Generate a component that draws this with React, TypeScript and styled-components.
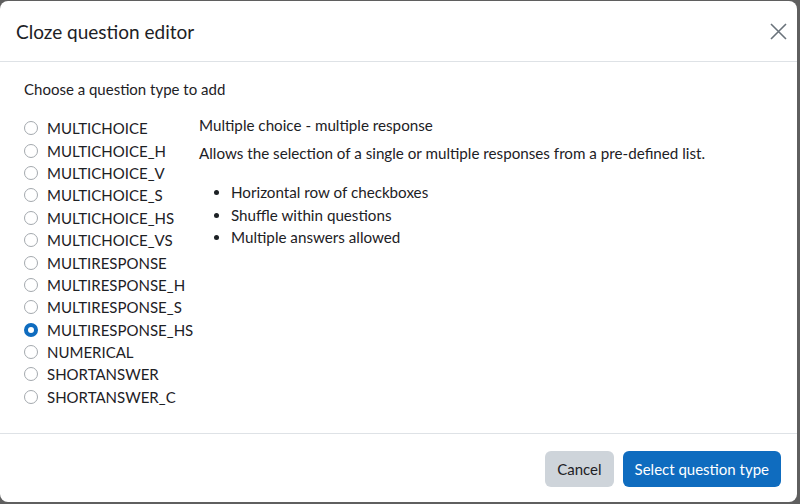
import React, { useState } from "react";
import styled, { createGlobalStyle } from "styled-components";

const Global = createGlobalStyle`
  html, body { margin: 0; padding: 0; }
  body {
    background: #5f5f5f;
    font-family: Lato, "Noto Sans", sans-serif;
    color: #1d2125;
    width: 800px;
    height: 504px;
    overflow: hidden;
  }
`;

const Backdrop = styled.div`
  width: 800px;
  height: 504px;
  padding: 1px 3px 2px 0;
  box-sizing: border-box;
`;

const Dialog = styled.div`
  background: #fff;
  border-radius: 8px;
  height: 100%;
  display: flex;
  flex-direction: column;
  overflow: hidden;
`;

const Header = styled.div`
  height: 60px;
  flex: none;
  display: flex;
  align-items: center;
  justify-content: space-between;
  padding: 0 5px 0 16px;
  border-bottom: 1px solid #dee2e6;
`;

const Title = styled.h5`
  margin: 0;
  font-size: 19px;
  font-weight: 400;
  padding-top: 1px;
`;

const Close = styled.button`
  border: 0;
  background: none;
  width: 28px;
  height: 28px;
  padding: 0;
  display: flex;
  align-items: center;
  justify-content: center;
  cursor: pointer;
`;

const Body = styled.div`
  flex: 1;
  padding: 17px 24px 0 24px;
  font-size: 15px;
`;

const Prompt = styled.div`
  line-height: 20px;
  margin-bottom: 18px;
`;

const Columns = styled.div`
  display: flex;
  gap: 8px;
`;

const List = styled.div`
  display: flex;
  flex-direction: column;
  width: 167px;
`;

const Option = styled.label`
  display: flex;
  align-items: center;
  height: 22.4px;
  gap: 9px;
  font-size: 15px;
  cursor: pointer;
`;

const Radio = styled.span<{ $checked?: boolean }>`
  width: 14px;
  height: 14px;
  border-radius: 50%;
  box-sizing: border-box;
  flex: none;
  border: ${(p) => (p.$checked ? "4px solid #0f6cbf" : "1px solid #a4a9ae")};
  background: #fff;
`;

const Details = styled.div`
  font-size: 15.2px;
`;

const DetailTitle = styled.div`
  line-height: 20px;
  margin-top: -2px;
`;

const DetailText = styled.div`
  line-height: 20px;
  margin-top: 8px;
`;

const Bullets = styled.ul`
  margin: 18px 0 0 0;
  padding-left: 32px;
  li { line-height: 22.5px; }
`;

const Footer = styled.div`
  flex: none;
  height: 68px;
  border-top: 1px solid #dee2e6;
  display: flex;
  align-items: center;
  justify-content: flex-end;
  gap: 9px;
  padding: 0 16px 0 0;
`;

const Button = styled.button<{ $primary?: boolean }>`
  height: 36px;
  border: 0;
  border-radius: 6px;
  padding: 0 12px;
  font-family: inherit;
  font-size: 15px;
  background: ${(p) => (p.$primary ? "#0f6cbf" : "#ced4da")};
  color: ${(p) => (p.$primary ? "#fff" : "#1d2125")};
  margin-top: 1px;
`;

const types = [
  "MULTICHOICE",
  "MULTICHOICE_H",
  "MULTICHOICE_V",
  "MULTICHOICE_S",
  "MULTICHOICE_HS",
  "MULTICHOICE_VS",
  "MULTIRESPONSE",
  "MULTIRESPONSE_H",
  "MULTIRESPONSE_S",
  "MULTIRESPONSE_HS",
  "NUMERICAL",
  "SHORTANSWER",
  "SHORTANSWER_C",
];

export default function App() {
  const [sel, setSel] = useState("MULTIRESPONSE_HS");
  return (
    <>
      <Global />
      <Backdrop>
        <Dialog>
          <Header>
            <Title>Cloze question editor</Title>
            <Close aria-label="Close">
              <svg width="17" height="17" viewBox="0 0 17 17">
                <path d="M1 1L16 16M16 1L1 16" stroke="#6a737b" strokeWidth="1.6" fill="none" />
              </svg>
            </Close>
          </Header>
          <Body>
            <Prompt>Choose a question type to add</Prompt>
            <Columns>
              <List>
                {types.map((t) => (
                  <Option key={t} onClick={() => setSel(t)}>
                    <Radio $checked={sel === t} />
                    {t}
                  </Option>
                ))}
              </List>
              <Details>
                <DetailTitle>Multiple choice - multiple response</DetailTitle>
                <DetailText>Allows the selection of a single or multiple responses from a pre-defined list.</DetailText>
                <Bullets>
                  <li>Horizontal row of checkboxes</li>
                  <li>Shuffle within questions</li>
                  <li>Multiple answers allowed</li>
                </Bullets>
              </Details>
            </Columns>
          </Body>
          <Footer>
            <Button>Cancel</Button>
            <Button $primary>Select question type</Button>
          </Footer>
        </Dialog>
      </Backdrop>
    </>
  );
}
